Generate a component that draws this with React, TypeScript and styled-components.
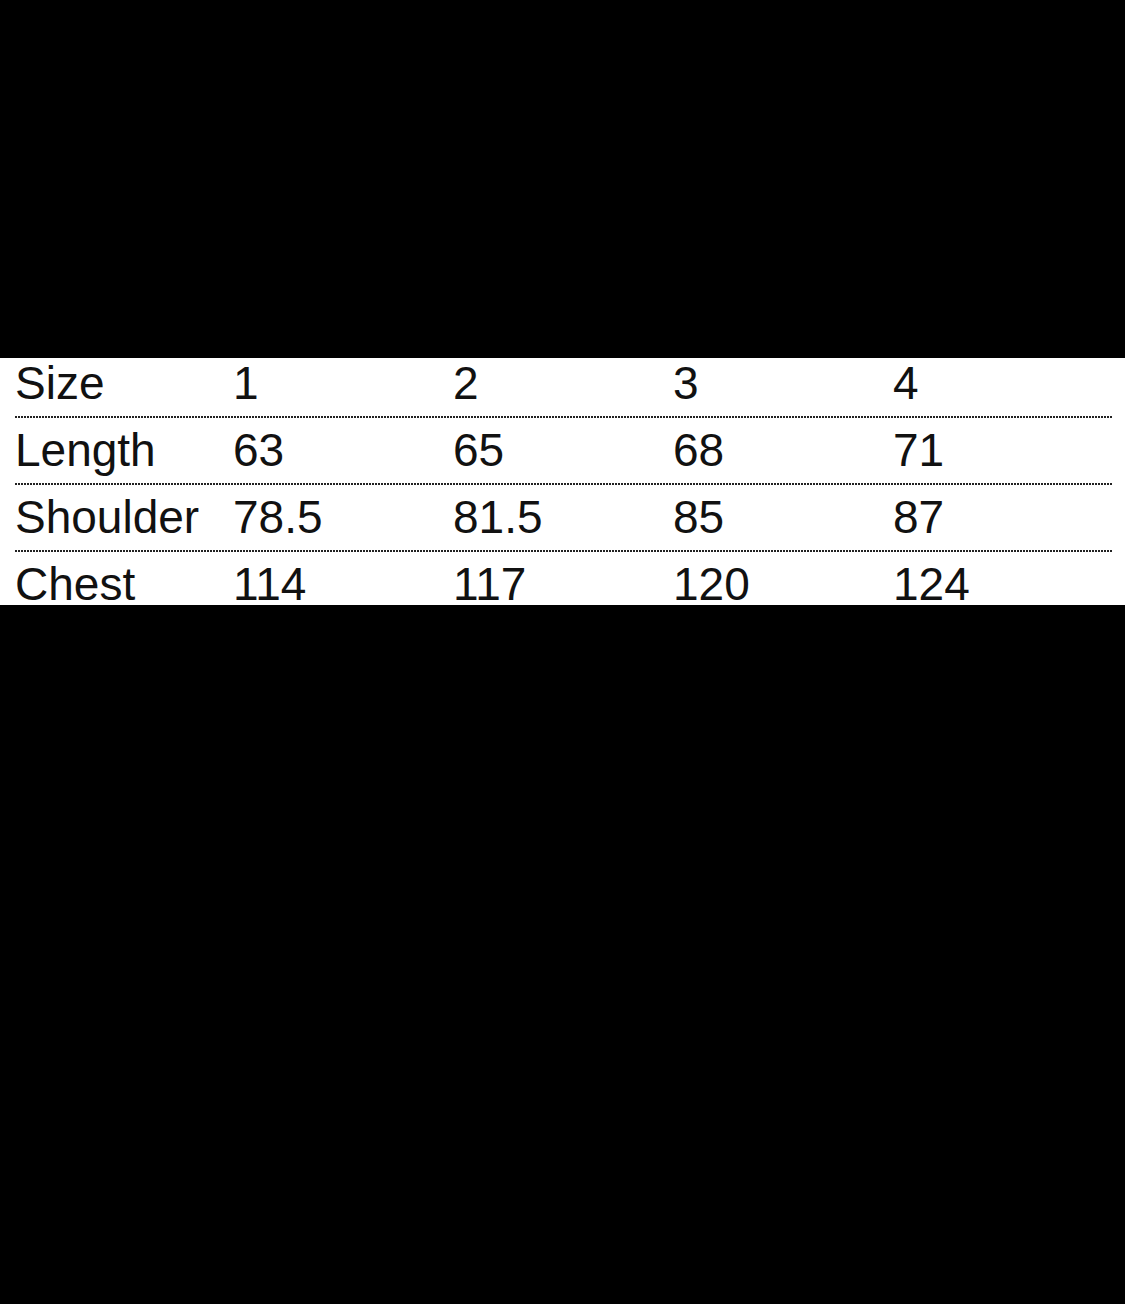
import React from "react";
import styled, { createGlobalStyle } from "styled-components";

const Global = createGlobalStyle`
  html, body {
    margin: 0;
    padding: 0;
    background: #000;
  }
  body {
    min-height: 1304px;
    font-family: "Liberation Sans", Arial, sans-serif;
  }
`;

const Page = styled.div`
  width: 1125px;
  height: 1304px;
  background: #000;
  padding-top: 358px;
  box-sizing: border-box;
`;

const Band = styled.div`
  background: #fff;
  height: 247px;
  overflow: hidden;
`;

const Table = styled.div`
  margin: -7px 13px 0 15px;
  display: flex;
  flex-direction: column;
`;

const Row = styled.div<{ $last?: boolean }>`
  display: grid;
  grid-template-columns: 218px 220px 220px 220px 1fr;
  height: 67px;
  box-sizing: border-box;
  padding-top: 13px;
  background-image: ${(p) =>
    p.$last
      ? "none"
      : "linear-gradient(to right, #222 0, #222 2px, transparent 2px)"};
  background-size: 3px 2px;
  background-repeat: repeat-x;
  background-position: 0 bottom;
`;

const Cell = styled.div`
  font-size: 46px;
  line-height: 38px;
  color: #111;
  white-space: nowrap;
`;

const rows: string[][] = [
  ["Size", "1", "2", "3", "4"],
  ["Length", "63", "65", "68", "71"],
  ["Shoulder", "78.5", "81.5", "85", "87"],
  ["Chest", "114", "117", "120", "124"],
];

export default function App() {
  return (
    <>
      <Global />
      <Page>
        <Band>
          <Table>
            {rows.map((r, i) => (
              <Row key={r[0]} $last={i === rows.length - 1}>
                {r.map((c, j) => (
                  <Cell key={j}>{c}</Cell>
                ))}
              </Row>
            ))}
          </Table>
        </Band>
      </Page>
    </>
  );
}
